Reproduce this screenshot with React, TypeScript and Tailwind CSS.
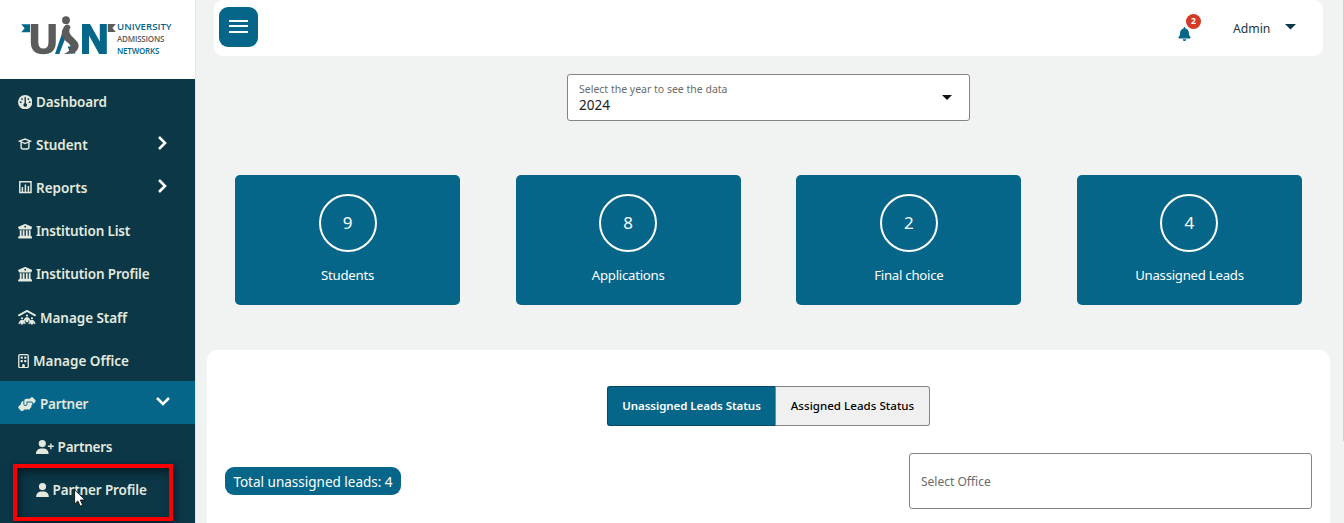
import type { ReactNode } from 'react';
import {
  FaGauge, FaBuildingColumns, FaPeopleRoof, FaRegBuilding, FaHandshakeAngle,
  FaUserPlus, FaUser, FaBell,
} from 'react-icons/fa6';

const Chevron = ({ down = false }: { down?: boolean }) => (
  <svg viewBox="0 0 16 16" className="h-4 w-4" fill="none" stroke="#fff" strokeWidth="2.6">
    <path d={down ? 'M2 5 8 11 14 5' : 'M4 2 10 8 4 14'} />
  </svg>
);

const StudentIcon = () => (
  <svg viewBox="0 0 14 14" className="mb-[3px] h-3.5 w-3.5" fill="none" stroke="currentColor" strokeWidth="1.4">
    <path d="M1.4 4.2 7 2 12.6 4.2 7 6.6Z M3.1 5V10Q3.1 12 5 12H9Q10.9 12 10.9 10V5" />
  </svg>
);

const ReportIcon = () => (
  <svg viewBox="0 0 14 14" className="mb-[3px] h-3.5 w-3.5" fill="none" stroke="currentColor" strokeWidth="1.5">
    <path d="M1.8 1.8H13V12.6H1.8Z M4.4 7V12 M7.4 4.5V12 M10.4 6V12" />
  </svg>
);

const Logo = () => (
  <div className="flex h-[79px] items-start bg-white pt-[15px] pl-[21px]">
    <svg viewBox="0 0 96 40" className="h-10 w-24">
      <path d="M.3 9.3H9V17.3H.3L3.6 13.3Z" fill="#05668a" />
      <path d="M9.8 9H17.3V27Q17.3 33.6 22.4 33.6 27.5 33.6 27.5 27V9H34.8V27Q34.8 39.3 22.3 39.3 9.8 39.3 9.8 27Z" fill="#5b5b5b" />
      <path d="M41.5 17 34 39H38.3L43.6 25Z M46.5 31.5 49.8 38.5H54.6L51.6 31.5Z" fill="#05668a" />
      <circle cx="45" cy="5.2" r="3.9" fill="#5b5b5b" />
      <path d="M44 10.5C38.5 17 40.5 23.5 46.5 27.5 51.5 31 50.5 36 43 38.9 53 40.2 58.6 35.5 57.4 29.2 56.2 23.5 44.5 20 49.6 12.2 48.4 9.4 45.8 8.9 44 10.5Z" fill="#5b5b5b" />
      <path d="M61 39V9H69L78.8 26.5V9H85.8V39H78.2L68 20.5V39Z" fill="#05668a" />
      <path d="M86.8 9H94.8L91.4 13 94.8 17H86.8Z" fill="#5b5b5b" />
    </svg>
    <div className="pt-[6px] font-['Open_Sans',sans-serif] text-[9.6px] leading-[12px] text-[#05668a]">
      <div className="tracking-[0.02px]">UNIVERSITY</div>
      <div className="text-[8px] tracking-[-0.2px] text-[#5b5b5b]">ADMISSIONS</div>
      <div className="text-[8px] font-semibold tracking-[-0.2px]">NETWORKS</div>
    </div>
  </div>
);

function Item({ icon, label, sub, active, arrow, className = '' }: {
  icon: ReactNode; label: string; sub?: boolean; active?: boolean; arrow?: 'right' | 'down'; className?: string;
}) {
  return (
    <div className={`flex h-[43.14px] shrink-0 items-center pt-[3px] pr-6 ${sub ? 'pl-9' : 'pl-[18px]'} ${active ? 'bg-[#05668a]' : ''}`}>
      <span className="mr-1 flex text-[14.4px]">{icon}</span>
      <span className={`whitespace-nowrap ${className}`}>{label}</span>
      {arrow && <span className="mb-[5px] ml-auto"><Chevron down={arrow === 'down'} /></span>}
    </div>
  );
}

const stats = [
  { value: 9, label: 'Students' },
  { value: 8, label: 'Applications' },
  { value: 2, label: 'Final choice' },
  { value: 4, label: 'Unassigned Leads' },
];

export default function App() {
  return (
    <div className="relative flex h-[523px] w-[1344px] overflow-hidden bg-[#f1f3f3] font-['Noto_Sans',sans-serif] text-[#222]">
      <aside className="flex w-[195px] shrink-0 flex-col bg-[#0b3747] text-[13.5px] font-semibold text-[#e4e9de]">
        <Logo />
        <Item icon={<FaGauge />} label="Dashboard" className="-ml-[0.4px] tracking-[-0.1px]" />
        <Item icon={<StudentIcon />} label="Student" arrow="right" className="tracking-[-0.05px]" />
        <Item icon={<ReportIcon />} label="Reports" arrow="right" />
        <Item icon={<FaBuildingColumns />} label="Institution List" className="-ml-[0.4px] tracking-[-0.16px]" />
        <Item icon={<FaBuildingColumns />} label="Institution Profile" className="-ml-[0.4px] tracking-[-0.14px]" />
        <Item icon={<FaPeopleRoof className="w-[18px]" />} label="Manage Staff" className="tracking-[-0.05px]" />
        <Item icon={<FaRegBuilding className="w-[11px]" />} label="Manage Office" />
        <Item icon={<FaHandshakeAngle className="w-[18px]" />} label="Partner" active arrow="down" className="tracking-[-0.25px]" />
        <Item icon={<FaUserPlus className="w-[18px]" />} label="Partners" sub className="-ml-[0.4px] tracking-[-0.25px]" />
        <Item icon={<FaUser className="w-[13px]" />} label="Partner Profile" sub className="-ml-[0.4px] tracking-[-0.14px]" />
      </aside>

      <main className="flex w-[1148px] flex-col border-l border-[#e3e5e5]">
        <header className="ml-[18px] flex h-14 w-[1109px] shrink-0 items-start rounded-[9px] bg-white pt-[7px] pl-[5px]">
          <button className="flex h-10 w-[39px] flex-col items-center justify-center gap-[3.5px] rounded-[9px] bg-[#05668a] pb-[2px]">
            <span className="h-[2px] w-[19px] bg-white" />
            <span className="h-[2px] w-[19px] bg-white" />
            <span className="h-[2px] w-[19px] bg-white" />
          </button>
          <div className="relative mt-5 ml-[919.5px] text-[14px] text-[#05668a]">
            <FaBell className="w-[13px]" />
            <span className="absolute -top-[13px] left-[8.5px] flex h-[15px] w-[15px] items-center justify-center rounded-full bg-[#d33b27] text-[8.5px] font-bold text-white">2</span>
          </div>
          <span className="mt-[11px] ml-[42.5px] text-[12.2px] leading-[22px] text-[#1d3540]">Admin</span>
          <svg viewBox="0 0 10 5" className="mt-[17px] ml-[15px] h-[5.5px] w-[11px]"><path d="M0 0H10L5 5Z" fill="#0b3747" /></svg>
        </header>

        <div className="mt-[18px] ml-[371px] flex h-[47px] w-[403px] shrink-0 items-center justify-between rounded-[3px] border border-[#858585] bg-white pr-[17px] pl-[11px]">
          <div>
            <div className="text-[10.5px] leading-[14px] text-[#6b6b6b]">Select the year to see the data</div>
            <div className="-mb-px pt-px text-[13.5px] leading-[17px]">2024</div>
          </div>
          <svg viewBox="0 0 10 5" className="mb-px h-[5px] w-[10px]"><path d="M0 0H10L5 5Z" fill="#111" /></svg>
        </div>

        <div className="mt-[54px] ml-[39px] flex w-[1067px] shrink-0 justify-between">
          {stats.map((s) => (
            <div key={s.label} className="flex h-[130px] w-[225px] flex-col items-center rounded-[5px] bg-[#05668a] pt-[19px] text-white">
              <div className="flex h-[58px] w-[58px] items-center justify-center rounded-full border-2 border-white text-[17px]">{s.value}</div>
              <div className="mt-[13px] text-[13.2px] leading-5 tracking-[-0.25px]">{s.label}</div>
            </div>
          ))}
        </div>

        <section className="mt-[45px] ml-[11px] flex h-[190px] w-[1123px] shrink-0 flex-col rounded-[10px] bg-white pt-9">
          <div className="ml-[400px] flex h-10 w-[323px] text-[11.5px] text-black">
            <button className="w-[169px] rounded-l-[3px] border border-[#06475f] border-r-[#858585] bg-[#05668a] font-semibold tracking-[-0.05px] text-white">Unassigned Leads Status</button>
            <button className="flex-1 rounded-r-[3px] border border-l-0 border-[#858585] bg-[#f0f0f0] font-medium tracking-[0.05px]">Assigned Leads Status</button>
          </div>
          <div className="mt-[27px] flex justify-between pr-[18px] pl-[18px]">
            <div className="mt-[14px] flex h-7 w-[176px] items-center justify-center rounded-[9px] bg-[#05668a] pt-[2px] text-[13.5px] whitespace-nowrap text-white">Total unassigned leads: 4</div>
            <div className="flex h-14 w-[403px] items-center rounded-[3px] border border-[#858585] pt-[2px] pl-[11px] text-[12px] text-[#6b6b6b]">Select Office</div>
          </div>
        </section>
      </main>

      <div className="absolute top-0 right-0 h-[441px] w-px bg-[#cfd2d2]" />
      <div className="absolute top-[464px] left-[13px] h-[57px] w-[160px] border-4 border-[#f80000] shadow-[2px_2px_7px_rgba(0,0,0,0.5),inset_3px_4px_9px_rgba(0,0,0,0.5)]" />
      <svg viewBox="0 0 12 18" className="absolute top-[489px] left-[74px] h-[18px] w-3">
        <path d="M.6.8V15L3.9 11.9 6.2 17.2 8.7 16.1 6.4 11H11Z" fill="#fff" stroke="#111" strokeWidth=".9" />
      </svg>
    </div>
  );
}
